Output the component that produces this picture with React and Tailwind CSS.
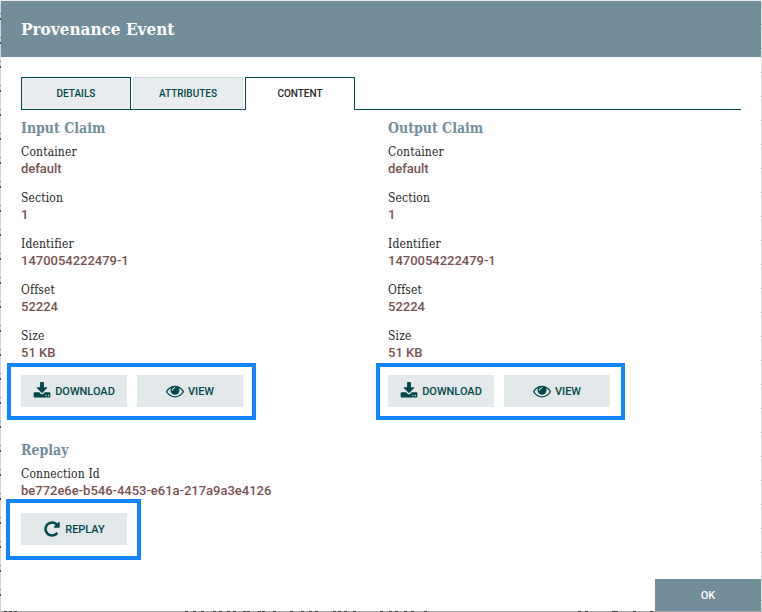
import React from 'react';

const slab = "font-['Roboto_Slab','DejaVu_Serif_Condensed','DejaVu_Serif',serif]";

function DownloadIcon() {
  return (
    <svg className="h-[18px] w-[18px] shrink-0" viewBox="0 0 1792 1792" fill="currentColor">
      <path d="M1344 1344q0-26-19-45t-45-19-45 19-19 45 19 45 45 19 45-19 19-45zm256 0q0-26-19-45t-45-19-45 19-19 45 19 45 45 19 45-19 19-45zm128-224v320q0 40-28 68t-68 28h-1472q-40 0-68-28t-28-68v-320q0-40 28-68t68-28h465l135 136q58 56 136 56t136-56l136-136h464q40 0 68 28t28 68zm-325-569q17 41-14 70l-448 448q-18 19-45 19t-45-19l-448-448q-31-29-14-70 17-39 59-39h256v-448q0-26 19-45t45-19h256q26 0 45 19t19 45v448h256q42 0 59 39z" />
    </svg>
  );
}

function EyeIcon() {
  return (
    <svg className="h-[18px] w-[18px] shrink-0" viewBox="0 0 1792 1792" fill="currentColor">
      <path d="M1664 960q-152-236-381-353 61 104 61 225 0 185-131.5 316.5t-316.5 131.5-316.5-131.5-131.5-316.5q0-121 61-225-229 117-381 353 133 205 333.5 326.5t434.5 121.5 434.5-121.5 333.5-326.5zm-720-384q0-20-14-34t-34-14q-125 0-214.5 89.5t-89.5 214.5q0 20 14 34t34 14 34-14 14-34q0-86 61-147t147-61q20 0 34-14t14-34zm848 384q0 34-20 69-140 230-376.5 368.5t-499.5 138.5-499.5-139-376.5-368q-20-35-20-69t20-69q140-229 376.5-368t499.5-139 499.5 139 376.5 368q20 35 20 69z" />
    </svg>
  );
}

function RepeatIcon() {
  return (
    <svg className="h-[18px] w-[18px] shrink-0" viewBox="0 0 1792 1792" fill="currentColor">
      <path d="M1664 256v448q0 26-19 45t-45 19h-448q-42 0-59-40-17-39 14-69l138-138q-148-137-349-137-104 0-198.5 40.5t-163.5 109.5-109.5 163.5-40.5 198.5 40.5 198.5 109.5 163.5 163.5 109.5 198.5 40.5q119 0 225-52t179-147q7-10 23-12 15 0 25 9l137 138q9 8 9.5 20.5t-7.5 22.5q-109 132-264 204.5t-327 72.5q-156 0-298-61t-245-164-164-245-61-298 61-298 164-245 245-164 298-61q147 0 284.5 55.5t244.5 156.5l130-129q29-31 70-14 39 17 39 59z" />
    </svg>
  );
}

function Button({ icon, label }) {
  return (
    <button className="flex h-8 w-[106px] items-center justify-center gap-1 bg-[#e3e8eb] text-[11px] font-medium leading-none tracking-[-0.02px] text-[#004849]">
      {icon}
      <span>{label}</span>
    </button>
  );
}

function Heading({ children }) {
  return <h2 className={`${slab} h-[19px] text-[14px] font-bold leading-[19px] text-[#728e9b]`}>{children}</h2>;
}

function Field({ label, value }) {
  return (
    <div className="h-[46px]">
      <div className={`${slab} h-[17px] pt-px text-[12px] leading-[17px] tracking-[0.15px] text-[#262626]`}>{label}</div>
      <div className="text-[13px] font-medium leading-[17px] tracking-[-0.01px] text-[#775351]">{value}</div>
    </div>
  );
}

function Claim({ title, highlight }) {
  return (
    <section className="w-[367px] pt-px">
      <Heading>{title}</Heading>
      <div className="mt-[5px] h-[232px]">
        <Field label="Container" value="default" />
        <Field label="Section" value="1" />
        <Field label="Identifier" value="1470054222479-1" />
        <Field label="Offset" value="52224" />
        <Field label="Size" value="51 KB" />
      </div>
      <div className="relative flex gap-[10px]">
        <Button icon={<DownloadIcon />} label="DOWNLOAD" />
        <Button icon={<EyeIcon />} label="VIEW" />
        <div className={`absolute -top-3 h-[57px] w-[249px] border-4 border-[#1184ff] ${highlight}`} />
      </div>
    </section>
  );
}

const specks = [4, 9, 14, 185, 193, 201, 213, 219, 227, 233, 243, 247, 258, 262, 273, 290, 301, 309, 315, 333, 338, 344, 353, 380, 389, 395, 404, 411, 424, 578, 585, 612, 615, 633, 650];

export default function App() {
  return (
    <div className="relative h-[612px] w-[762px] overflow-hidden bg-[#aaaaaa] font-[Roboto,sans-serif]">
      <div className="grid h-full grid-cols-[1px_760px_1px] grid-rows-[1px_610px_1px]">
        <div className="col-span-3 bg-[#e8ecec]" />
        <div className="bg-[#d4d6d7]">
          {Array.from({ length: 25 }, (_, i) => (
            <div key={i} className="flex h-6 flex-col pt-[12px]">
              <div className="h-px bg-[#888888]" />
              <div className="mt-1 h-[2px] bg-[#444444]" />
            </div>
          ))}
        </div>
        <main className="flex flex-col bg-white">
          <header className="flex h-14 shrink-0 items-center bg-[#728e9b] pl-5">
            <h1 className={`${slab} text-[17px] font-bold leading-6 text-white`}>Provenance Event</h1>
          </header>

          <div className="mx-5 mt-5 flex h-[33px] shrink-0 text-[10px] font-medium text-[#004849]">
            <div className="flex w-[110px] items-center justify-center border border-[#004849] bg-[#e9edef]">DETAILS</div>
            <div className="w-[2px] border-b border-[#004849]" />
            <div className="flex w-[110px] items-center justify-center border border-[#ccdadb] border-b-[#004849] bg-[#e9edef]">ATTRIBUTES</div>
            <div className="w-[2px] border-b border-[#004849]" />
            <div className="flex w-[110px] items-center justify-center border border-b-0 border-[#004849] bg-white pb-px text-[#262626]">CONTENT</div>
            <div className="flex-1 border-b border-[#004849]" />
          </div>

          <div className="ml-5 mt-2 flex h-[289px] shrink-0">
            <Claim title="Input Claim" highlight="-left-[14px]" />
            <Claim title="Output Claim" highlight="-left-3" />
          </div>

          <section className="ml-5 mt-[34px] h-[104px] shrink-0">
            <Heading>Replay</Heading>
            <div className="mt-[5px] h-12">
              <Field label="Connection Id" value="be772e6e-b546-4453-e61a-217a9a3e4126" />
            </div>
            <div className="relative">
              <Button icon={<RepeatIcon />} label="REPLAY" />
              <div className="absolute -left-[15px] -top-[14px] h-[61px] w-[135px] border-4 border-[#1184ff]" />
            </div>
          </section>

          <button className="ml-auto mt-auto h-8 w-[106px] bg-[#728e9b] pt-[2px] text-[11px] font-medium text-white">OK</button>
        </main>
        <div className="bg-[#dddfdf]">
          {Array.from({ length: 25 }, (_, i) => (
            <div key={i} className="flex h-6 flex-col justify-end">
              <div className="h-px bg-[#b0b6b8]" />
            </div>
          ))}
        </div>
        <div className="relative col-span-3 bg-[#aaaaaa]">
          {specks.map((x) => (
            <i key={x} className="absolute top-0 h-px w-[3px] bg-[#383838]" style={{ left: x }} />
          ))}
        </div>
      </div>
    </div>
  );
}
